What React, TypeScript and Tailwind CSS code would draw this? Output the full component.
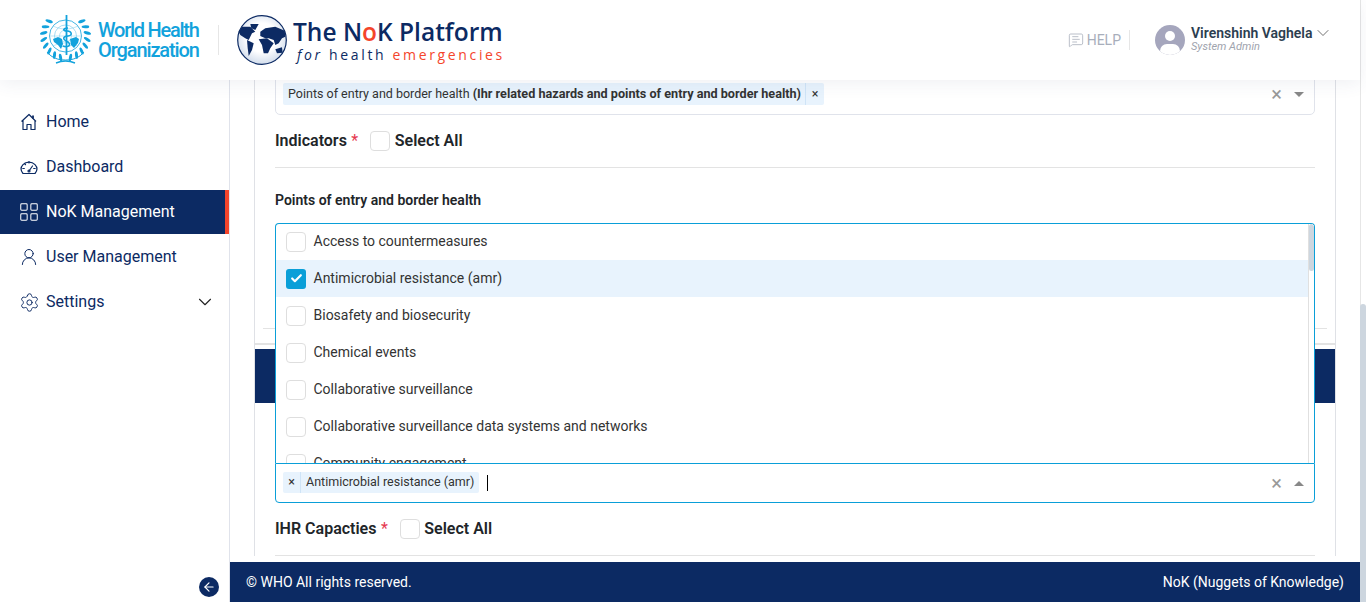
import React from "react";
import { ChevronDown, LayoutGrid, Settings, UserRound, MessageSquareText, ArrowLeft, Check } from "lucide-react";

const options = [
  "Access to countermeasures",
  "Antimicrobial resistance (amr)",
  "Biosafety and biosecurity",
  "Chemical events",
  "Collaborative surveillance",
  "Collaborative surveillance data systems and networks",
  "Community engagement",
];

function WhoLogo() {
  const leaves = [];
  for (let i = 0; i < 8; i++) {
    const a = 48 + i * 17;
    leaves.push(
      <ellipse key={"r" + i} cx="26.5" cy="-1" rx="1.500" ry="3.800" fill="#12a2dc" transform={`rotate(${a} 26.5 21) rotate(24 26.5 -1)`} />,
      <ellipse key={"l" + i} cx="26.5" cy="-1" rx="1.500" ry="3.800" fill="#12a2dc" transform={`rotate(${-a} 26.5 21) rotate(-24 26.5 -1)`} />
    );
  }
  return (
    <svg width="53" height="50" viewBox="0 0 53 50" className="shrink-0">
      {leaves}
      <path d="M8 37c5 6 11 8 18.500 8S40 43 45 37" fill="none" stroke="#12a2dc" strokeWidth="1" />
      <path d="M17 48c6-2.500 13-2.500 19 0" fill="none" stroke="#12a2dc" strokeWidth="1.400" />
      <circle cx="26.500" cy="21" r="16" fill="none" stroke="#12a2dc" strokeWidth="0.800" />
      <circle cx="26.500" cy="21" r="11" fill="none" stroke="#7fcdec" strokeWidth="0.700" />
      <circle cx="26.500" cy="21" r="6" fill="none" stroke="#7fcdec" strokeWidth="0.600" />
      <path d="M10.500 21h32M14 11c8 4 17 4 25 0M14 31c8-4 17-4 25 0" fill="none" stroke="#7fcdec" strokeWidth="0.500" />
      <path d="M14 24l5-2 4 2 1 5-2 5-3-4-4-3zM31 24l6-2 3 2-1 4-4 5-3-3z" fill="#12a2dc" />
      <path d="M27.500 0v40" stroke="#12a2dc" strokeWidth="1.800" />
      <path d="M24 31c6 2 9-2 4-4.500s-4-5 1-5.500 4-5-1-5-4-3 1-3" fill="none" stroke="#12a2dc" strokeWidth="1.500" />
    </svg>
  );
}

function GlobeLogo() {
  return (
    <svg width="50" height="50" viewBox="0 0 50 50" className="shrink-0">
      <defs>
        <radialGradient id="globeFill" cx="0.5" cy="0.45" r="0.6">
          <stop offset="0.5" stopColor="#ffffff" />
          <stop offset="1" stopColor="#c9d6e8" />
        </radialGradient>
      </defs>
      <circle cx="25" cy="25" r="24.300" fill="url(#globeFill)" stroke="#0c2a63" strokeWidth="1.200" />
      <g fill="#0c2a63">
        <path d="M1.700 16.700 5 11.700l8.300 0 5 5-3.300 1.600-3.300 6.700-3.400-1.700L3.300 20z" />
        <path d="M13.300 9h8.400l-3.400 6-4-1.700z" />
        <path d="M10 25l6.700 3.300L15 35l-3.300 6-1-7.700z" />
        <path d="M23.300 16.700l5-3.400 10-1.600 9.500 4 .5 6-3.300 1.600-3.300 5L38.300 30l-1.600-5-5-1.700h-3.400l-5-2.300z" />
        <path d="M21.700 24.300l8.300-1 6.700 5-3.400 5-2.300 5h-4.300L25 30z" />
        <path d="M38.300 34.300l6.700-2 .7 5.400-5.700.6z" />
      </g>
    </svg>
  );
}

function HomeIcon() {
  return (
    <svg width="18" height="18" viewBox="0 0 18 18" fill="none" stroke="currentColor" strokeWidth="1.200" strokeLinejoin="round" className="shrink-0">
      <path d="M1.500 8.500 9 1.500l7 7M3 7.500V16.500h4v-5h4v5h4V7.500" />
      <path d="M13 2.500v3" strokeWidth="1.800" />
    </svg>
  );
}

function GaugeIcon() {
  return (
    <svg width="18" height="18" viewBox="0 0 18 18" fill="none" stroke="currentColor" strokeWidth="1.200" strokeLinecap="round" className="shrink-0">
      <path d="M3 15.500h12c2.500-3 2.200-6.500 0-8.800a8.300 8.300 0 0 0-12 0C0.800 9 0.500 12.500 3 15.500z" />
      <path d="M9 13l3.500-5M9 3.500v1.500M4.500 5.500l1 1.200M2.800 10.500h1.500M15.200 10.500h-1.500" />
      <circle cx="9" cy="13" r="1" />
    </svg>
  );
}

function NavItem({ icon, label, active, caret }: { icon: React.ReactNode; label: string; active?: boolean; caret?: boolean }) {
  return (
    <div className={active ? "relative flex h-[44px] items-center gap-[8px] bg-[#0c2a63] pl-[20px] text-white" : "flex h-[44px] items-center gap-[8px] pl-[20px] text-[#0c2a63]"}>
      <span className="flex h-[18px] w-[18px] shrink-0 items-center justify-center">{icon}</span>
      <span className="text-[16px] leading-none">{label}</span>
      {caret && <ChevronDown size={22} strokeWidth={1.200} className="ml-auto mr-[13px] shrink-0 text-[#222]" />}
      {active && <span className="absolute right-0 top-0 h-full w-[4px] bg-[#f4452b]" />}
    </div>
  );
}

function Checkbox({ checked }: { checked?: boolean }) {
  return checked ? (
    <span className="flex h-[20px] w-[20px] shrink-0 items-center justify-center rounded-[3px] bg-[#0a9fd8]">
      <Check size={13} strokeWidth={4} className="text-white" />
    </span>
  ) : (
    <span className="block h-[20px] w-[20px] shrink-0 rounded-[4px] border border-[#dedede] bg-white" />
  );
}

function SelectControls({ open }: { open?: boolean }) {
  return (
    <div className="ml-auto flex items-center gap-[12px] pr-[10px] text-[#999]">
      <span className="text-[20px] leading-none">×</span>
      {open ? (
        <span className="h-0 w-0 border-x-[5px] border-b-[5px] border-x-transparent border-b-[#888]" />
      ) : (
        <span className="h-0 w-0 border-x-[5px] border-t-[5px] border-x-transparent border-t-[#888]" />
      )}
    </div>
  );
}

function CheckHeading({ label }: { label: string }) {
  return (
    <div className="flex items-center">
      <span className="text-[16px] font-semibold leading-[20px] text-[#212529]">{label}</span>
      <span className="ml-[4.500px] text-[16px] leading-[20px] text-[#e5384f]">*</span>
      <span className="ml-[12px]"><Checkbox /></span>
      <span className="ml-[4.500px] text-[16px] font-semibold leading-[20px] text-[#212529]">Select All</span>
    </div>
  );
}

export default function App() {
  return (
    <div className="flex h-[602px] w-[1366px] overflow-hidden bg-white font-['Roboto',sans-serif]">
      <div className="flex w-[1360px] flex-col">
        <header className="relative z-20 flex h-[80px] shrink-0 items-center bg-white pl-[39px] pr-[27px] shadow-[0_4px_16px_rgba(60,80,120,0.08)]">
          <WhoLogo />
          <div className="ml-[6px] w-[100px] text-[20px] font-medium leading-[20px] text-[#12a2dc]">
            <div className="whitespace-nowrap tracking-[-1.250px]">World Health</div>
            <div className="whitespace-nowrap tracking-[-1.100px]">Organization</div>
          </div>
          <span className="ml-[20px] h-[30px] w-px bg-[#e6e6e6]" />
          <span className="ml-[18px]"><GlobeLogo /></span>
          <div className="ml-[6px] font-['Open_Sans',sans-serif]">
            <div className="whitespace-nowrap text-[24.500px] font-semibold leading-[29px] text-[#0c2a63]">
              The N<span className="text-[#f4452b]">o</span>K Platform
            </div>
            <div className="ml-[4px] whitespace-nowrap text-[14px] leading-[18px] tracking-[2.650px] text-[#0c2a63]">
              <span className="italic">for</span> health <span className="text-[#f4452b]">emergencies</span>
            </div>
          </div>
          <div className="ml-auto flex items-center">
            <MessageSquareText size={16} strokeWidth={1.200} className="text-[#a8aebb]" />
            <span className="ml-[3px] text-[14px] text-[#a8aebb]">HELP</span>
            <span className="ml-[8px] h-[20px] w-px bg-[#e6e6e6]" />
            <span className="relative ml-[25px] flex h-[30px] w-[30px] items-center justify-center overflow-hidden rounded-full bg-[#a5a6bd]">
              <span className="absolute left-[10px] top-[6px] h-[10px] w-[10px] rounded-full bg-white" />
              <span className="absolute left-[5px] top-[19px] h-[14px] w-[20px] rounded-full bg-white" />
            </span>
            <div className="ml-[6px] w-[121px] -translate-y-[1px]">
              <div className="whitespace-nowrap text-[14px] font-semibold leading-[16px] text-[#2c3e50]">Virenshinh Vaghela</div>
              <div className="whitespace-nowrap text-[11px] italic leading-[12px] text-[#a0a4ae]">System Admin</div>
            </div>
            <ChevronDown size={20} strokeWidth={1} className="ml-px -translate-y-[7px] text-[#555]" />
          </div>
        </header>

        <div className="flex min-h-0 flex-1">
          <aside className="relative flex w-[230px] shrink-0 flex-col gap-px border-r border-[#e0e3eb] bg-white pt-[20px]">
            <NavItem icon={<HomeIcon />} label="Home" />
            <NavItem icon={<GaugeIcon />} label="Dashboard" />
            <NavItem active icon={<LayoutGrid size={22} strokeWidth={1.100} className="shrink-0" />} label="NoK Management" />
            <NavItem icon={<UserRound size={20} strokeWidth={1.200} className="shrink-0" />} label="User Management" />
            <NavItem caret icon={<Settings size={21} strokeWidth={1.100} className="shrink-0" />} label="Settings" />
            <button className="absolute bottom-[5px] right-[10px] flex h-[20px] w-[20px] items-center justify-center rounded-full bg-[#0c2a63]">
              <ArrowLeft size={14} strokeWidth={2} className="text-white" />
            </button>
          </aside>

          <div className="flex min-w-0 flex-1 flex-col">
            <main className="min-h-0 flex-1 overflow-hidden pl-[24px] pr-[24px]">
              <div className="-mt-[7px] border-x border-[#dfe1e6]">
                <section className="h-[272px] border-b-2 border-[#e3e3e3] px-[20px]">
                  <div className="flex h-[42px] items-center rounded-b-[5px] border border-[#e0e3eb] pl-[7px]">
                    <span className="flex h-[22px] items-center whitespace-nowrap rounded-[2px] bg-[#e8f3fd] pl-[5px] text-[12.500px] text-[#333]">
                      Points of entry and border health&nbsp;<b className="text-[12.650px] font-bold">(Ihr related hazards and points of entry and border health)</b>
                      <span className="ml-[4px] flex h-full w-[19px] items-center justify-center border-l border-[#cfe4f7] text-[#333]">×</span>
                    </span>
                    <SelectControls />
                  </div>
                  <div className="mt-[16px]"><CheckHeading label="Indicators" /></div>
                  <div className="mt-[16px] border-t border-[#e3e3e3]" />
                  <div className="mt-[23px] text-[14px] font-semibold leading-[18px] text-[#212529]">Points of entry and border health</div>
                  <div className="-mx-[12px] mt-[119px] border-t border-[#e3e3e3]" />
                </section>
                <div className="mt-[4px] h-[54px] bg-[#0c2a63]" />
                <section className="relative px-[20px] pt-[60px]">
                  <div className="relative">
                    <div className="absolute bottom-full left-0 z-10 h-[240px] w-full overflow-hidden rounded-t-[4px] border-x border-t border-[#0a9fd8] bg-white">
                      <div className="-mt-px">
                        {options.map((o) => (
                          <div key={o} className={o.startsWith("Antimicrobial") ? "flex h-[37px] items-center gap-[7.500px] bg-[#e8f3fd] px-[10px]" : "flex h-[37px] items-center gap-[7.500px] px-[10px]"}>
                            <Checkbox checked={o.startsWith("Antimicrobial")} />
                            <span className="text-[14px] text-[#333]">{o}</span>
                          </div>
                        ))}
                      </div>
                      <div className="absolute bottom-0 right-0 top-0 w-[6px] border-l border-[#e0e0e0] bg-white">
                        <div className="h-[47px] rounded-[3px] bg-[#cdd6df]" />
                      </div>
                    </div>
                    <div className="flex h-[40px] items-center rounded-b-[4px] border border-[#0a9fd8] bg-white pl-[7px]">
                      <span className="-mt-px flex h-[21px] items-center whitespace-nowrap rounded-[2px] bg-[#e8f3fd] pr-[5px] text-[12.500px] text-[#333]">
                        <span className="flex h-full w-[18px] items-center justify-center border-r border-[#cfe4f7]">×</span>
                        <span className="ml-[5px]">Antimicrobial resistance (amr)</span>
                      </span>
                      <span className="ml-[8px] h-[16px] w-px bg-black" />
                      <SelectControls open />
                    </div>
                  </div>
                  <div className="mt-[16px]"><CheckHeading label="IHR Capacties" /></div>
                  <div className="mt-[16px] border-t border-[#e3e3e3]" />
                </section>
              </div>
            </main>
            <footer className="flex h-[40px] shrink-0 items-center justify-between bg-[#0c2a63] px-[16px] text-[14px] text-white">
              <span>© WHO All rights reserved.</span>
              <span>NoK (Nuggets of Knowledge)</span>
            </footer>
          </div>
        </div>
      </div>
      <div className="flex w-[6px] shrink-0 flex-col border-l border-[#e6e6e6] bg-white">
        <div className="-ml-px mt-auto h-[298px] rounded-t-[3px] bg-[#cdd6df]" />
      </div>
    </div>
  );
}
